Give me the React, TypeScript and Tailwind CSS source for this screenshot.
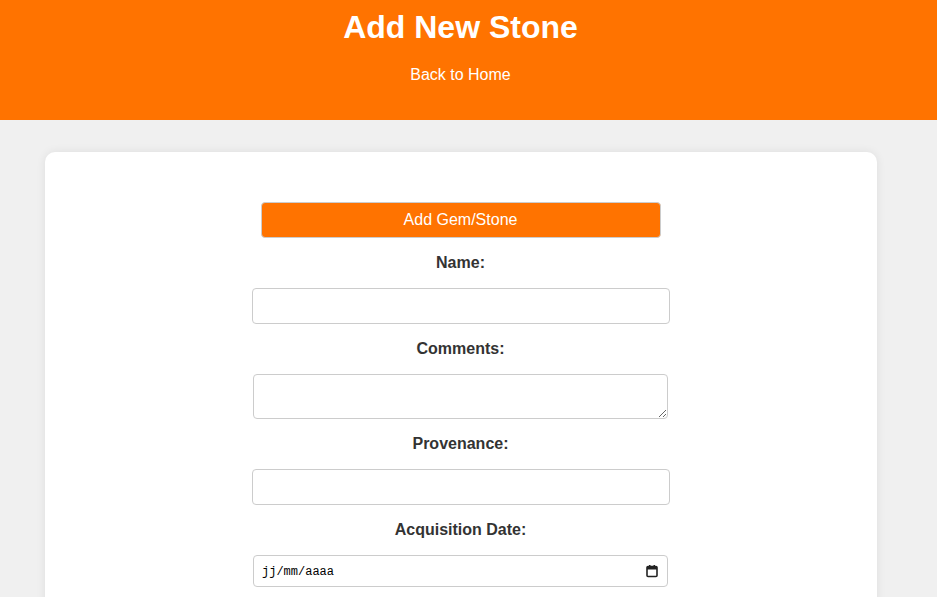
import React from 'react';

function Field({ label, children }: { label: string; children: React.ReactNode }) {
  return (
    <>
      <label className="block text-center text-[16px] leading-[20px] font-bold text-[#333]">{label}</label>
      {children}
    </>
  );
}

export default function App() {
  return (
    <div className="min-h-[597px] bg-[#f0f0f0] font-['Liberation_Sans',Arial,sans-serif]">
      <header className="h-[120px] bg-[#ff7300] pr-4 text-center text-white">
        <h1 className="pt-[9px] text-[32px] leading-[37px] font-bold">Add New Stone</h1>
        <a href="#" className="mt-[20px] block text-[16px] leading-[18px]">Back to Home</a>
      </header>

      <div className="pr-4 pt-8">
        <div className="mx-auto w-[832px] rounded-[10px] bg-white pt-[50px] pb-10 shadow-[0_0_10px_rgba(0,0,0,0.08)]">
          <form className="mx-auto flex w-[418px] flex-col items-center gap-[15px]">
            <button
              type="button"
              className="h-[36px] w-[400px] rounded-[4px] border border-[#ccc] bg-[#ff7300] text-[16px] text-white"
            >
              Add Gem/Stone
            </button>

            <Field label="Name:">
              <input type="text" className="h-[36px] w-[418px] rounded-[4px] border border-[#ccc] px-2 outline-none" />
            </Field>

            <Field label="Comments:">
              <textarea className="block h-[45px] w-[415px] rounded-[4px] border border-[#ccc] px-2 outline-none" />
            </Field>

            <Field label="Provenance:">
              <input type="text" className="h-[36px] w-[418px] rounded-[4px] border border-[#ccc] px-2 outline-none" />
            </Field>

            <Field label="Acquisition Date:">
              <div className="flex h-[32px] w-[415px] items-center justify-between rounded-[4px] border border-[#ccc] pl-2 pr-[8px]">
                <span className="mt-[2px] font-['Liberation_Mono',monospace] text-[12px] text-black">jj/mm/aaaa</span>
                <svg width="14" height="14" viewBox="0 0 14 14" fill="none">
                  <rect x="2" y="2.5" width="10" height="10" rx="1" stroke="#222" strokeWidth="1.6" />
                  <rect x="2" y="2.5" width="10" height="3" fill="#222" />
                  <rect x="4" y="1" width="1.5" height="2.5" fill="#222" />
                  <rect x="8.5" y="1" width="1.5" height="2.5" fill="#222" />
                </svg>
              </div>
            </Field>
          </form>
        </div>
      </div>
    </div>
  );
}
